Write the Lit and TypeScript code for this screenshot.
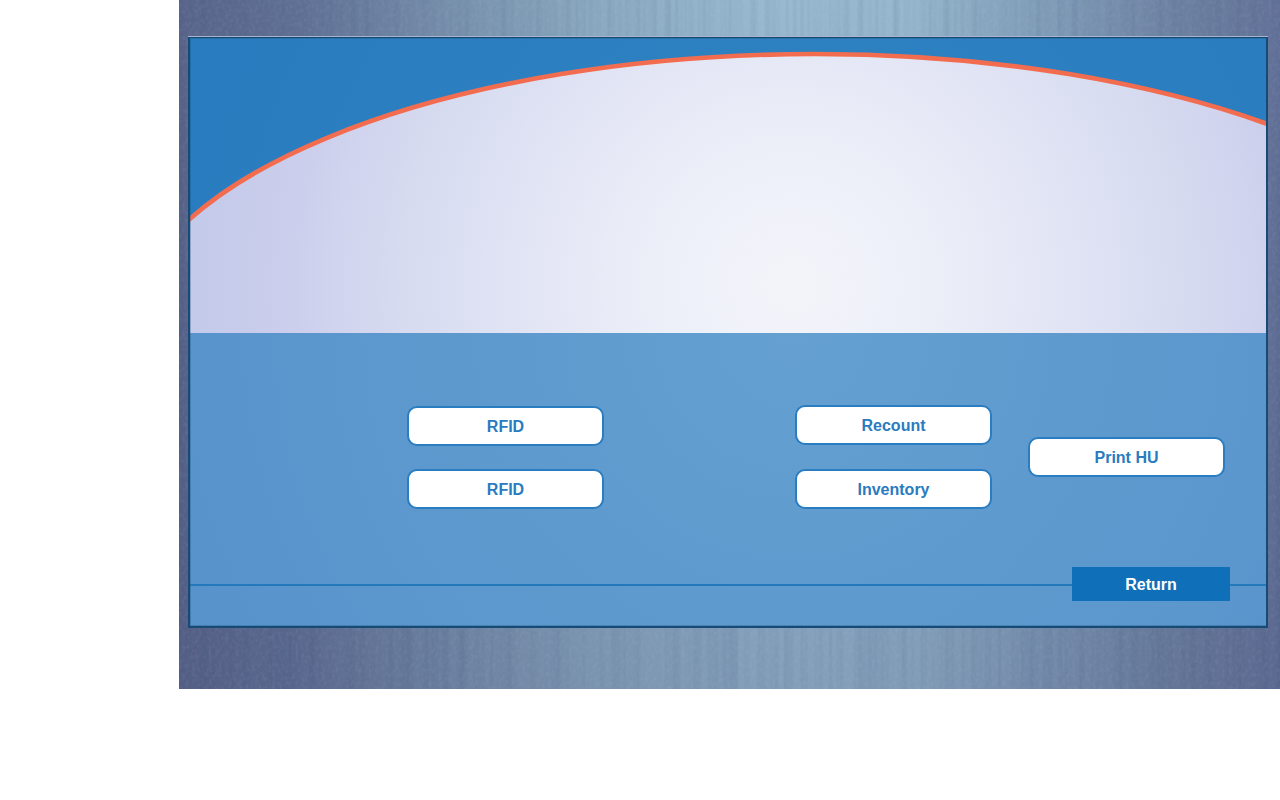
import { LitElement, html, css } from "lit";
import { customElement } from "lit/decorators.js";

@customElement("app-root")
export class AppRoot extends LitElement {
  static styles = css`
    :host {
      display: block;
      font-family: "Liberation Sans", Arial, sans-serif;
    }
    * {
      box-sizing: border-box;
    }
    .stage {
      position: relative;
      margin-left: 179px;
      padding: 37px 12px 61px 9px;
      background:
        linear-gradient(to bottom, rgba(70, 76, 118, 0) 0%, rgba(70, 76, 118, 0.24) 100%),
        linear-gradient(
          to right,
          #59648a 0%,
          #607095 11%,
          #7a93ae 26%,
          #8baac1 38%,
          #98b9cf 53%,
          #96b7cd 66%,
          #829fb9 78%,
          #6d81a1 91%,
          #637198 100%
        );
    }
    .grain {
      position: absolute;
      inset: 0;
      width: 100%;
      height: 100%;
      display: block;
    }
    .panel {
      position: relative;
      border: solid #164b75;
      border-width: 1px 2px 2px;
      box-shadow: 0 -1px 0 #a9b3cc;
      background: radial-gradient(circle 680px at 56% 295px, #65a0d1, #5792cb);
    }
    .hero {
      display: block;
      width: 100%;
      height: 295px;
    }
    .actions {
      display: flex;
      justify-content: flex-end;
      align-items: flex-end;
      padding: 72px 41px 58px 0;
    }
    .column {
      display: flex;
      flex-direction: column;
    }
    .left {
      gap: 23px;
      margin-right: 191px;
    }
    .middle {
      gap: 24px;
      margin-right: 36px;
    }
    .right {
      align-self: center;
    }
    button {
      margin: 0;
      padding: 1px 0 0;
      font: bold 16px/20px "Liberation Sans", Arial, sans-serif;
      cursor: pointer;
    }
    .action {
      width: 197px;
      height: 40px;
      border: 2px solid #2a7dc0;
      border-radius: 10px;
      background: #fff;
      color: #2a7bbf;
    }
    .footer {
      display: flex;
      align-items: flex-end;
      padding-bottom: 25px;
    }
    .rule {
      height: 2px;
      margin-bottom: 15px;
      background: #2479bb;
    }
    .grow {
      flex: 1;
    }
    .end {
      width: 36px;
    }
    .return {
      width: 158px;
      height: 34px;
      border: 0;
      background: #0f6fb8;
      color: #fff;
    }
    .bevel {
      position: absolute;
      inset: 0;
      border: solid rgba(22, 75, 117, 0.3);
      border-width: 1px 0 1px 1px;
      pointer-events: none;
    }
  `;

  render() {
    return html`
      <main class="stage">
        <svg class="grain" aria-hidden="true">
          <filter id="ridges" x="0" y="0" width="100%" height="100%" color-interpolation-filters="sRGB">
            <feTurbulence type="fractalNoise" baseFrequency="0.14 0.001" numOctaves="2" seed="4" />
            <feColorMatrix values="0 0 0 0 0.2  0 0 0 0 0.3  0 0 0 0 0.45  1.2 0 0 0 -0.5" />
          </filter>
          <filter id="speckle" x="0" y="0" width="100%" height="100%" color-interpolation-filters="sRGB">
            <feTurbulence type="fractalNoise" baseFrequency="0.3 0.22" numOctaves="2" seed="9" />
            <feColorMatrix values="0 0 0 0 0.7  0 0 0 0 0.82  0 0 0 0 0.92  1 0 0 0 -0.42" />
          </filter>
          <rect width="100%" height="100%" filter="url(#ridges)" opacity="0.25" />
          <rect width="100%" height="100%" filter="url(#speckle)" opacity="0.22" />
        </svg>
        <section class="panel">
          <svg class="hero" viewBox="0 0 1076 295" preserveAspectRatio="none" aria-hidden="true">
            <defs>
              <radialGradient id="sky" gradientUnits="userSpaceOnUse" cx="600" cy="250" r="620">
                <stop offset="0" stop-color="#2f84c2" />
                <stop offset="1" stop-color="#297cbf" />
              </radialGradient>
              <radialGradient id="dome" gradientUnits="userSpaceOnUse" cx="602" cy="247" r="620">
                <stop offset="0" stop-color="#f3f4f9" />
                <stop offset="0.13" stop-color="#f0f2fa" />
                <stop offset="0.3" stop-color="#e9ebf7" />
                <stop offset="0.47" stop-color="#e0e3f4" />
                <stop offset="0.63" stop-color="#d6dbf0" />
                <stop offset="0.74" stop-color="#d0d4ee" />
                <stop offset="0.82" stop-color="#cbceec" />
                <stop offset="1" stop-color="#c2c9ea" />
              </radialGradient>
            </defs>
            <rect width="1076" height="295" fill="url(#sky)" />
            <ellipse cx="625" cy="302" rx="690" ry="286" fill="url(#dome)" stroke="#f26d4f" stroke-width="4.6" />
          </svg>
          <div class="actions">
            <div class="column left">
              <button class="action" type="button">RFID</button>
              <button class="action" type="button">RFID</button>
            </div>
            <div class="column middle">
              <button class="action" type="button">Recount</button>
              <button class="action" type="button">Inventory</button>
            </div>
            <div class="column right">
              <button class="action" type="button">Print HU</button>
            </div>
          </div>
          <div class="footer">
            <div class="rule grow"></div>
            <button class="return" type="button">Return</button>
            <div class="rule end"></div>
          </div>
          <div class="bevel"></div>
        </section>
      </main>
    `;
  }
}
